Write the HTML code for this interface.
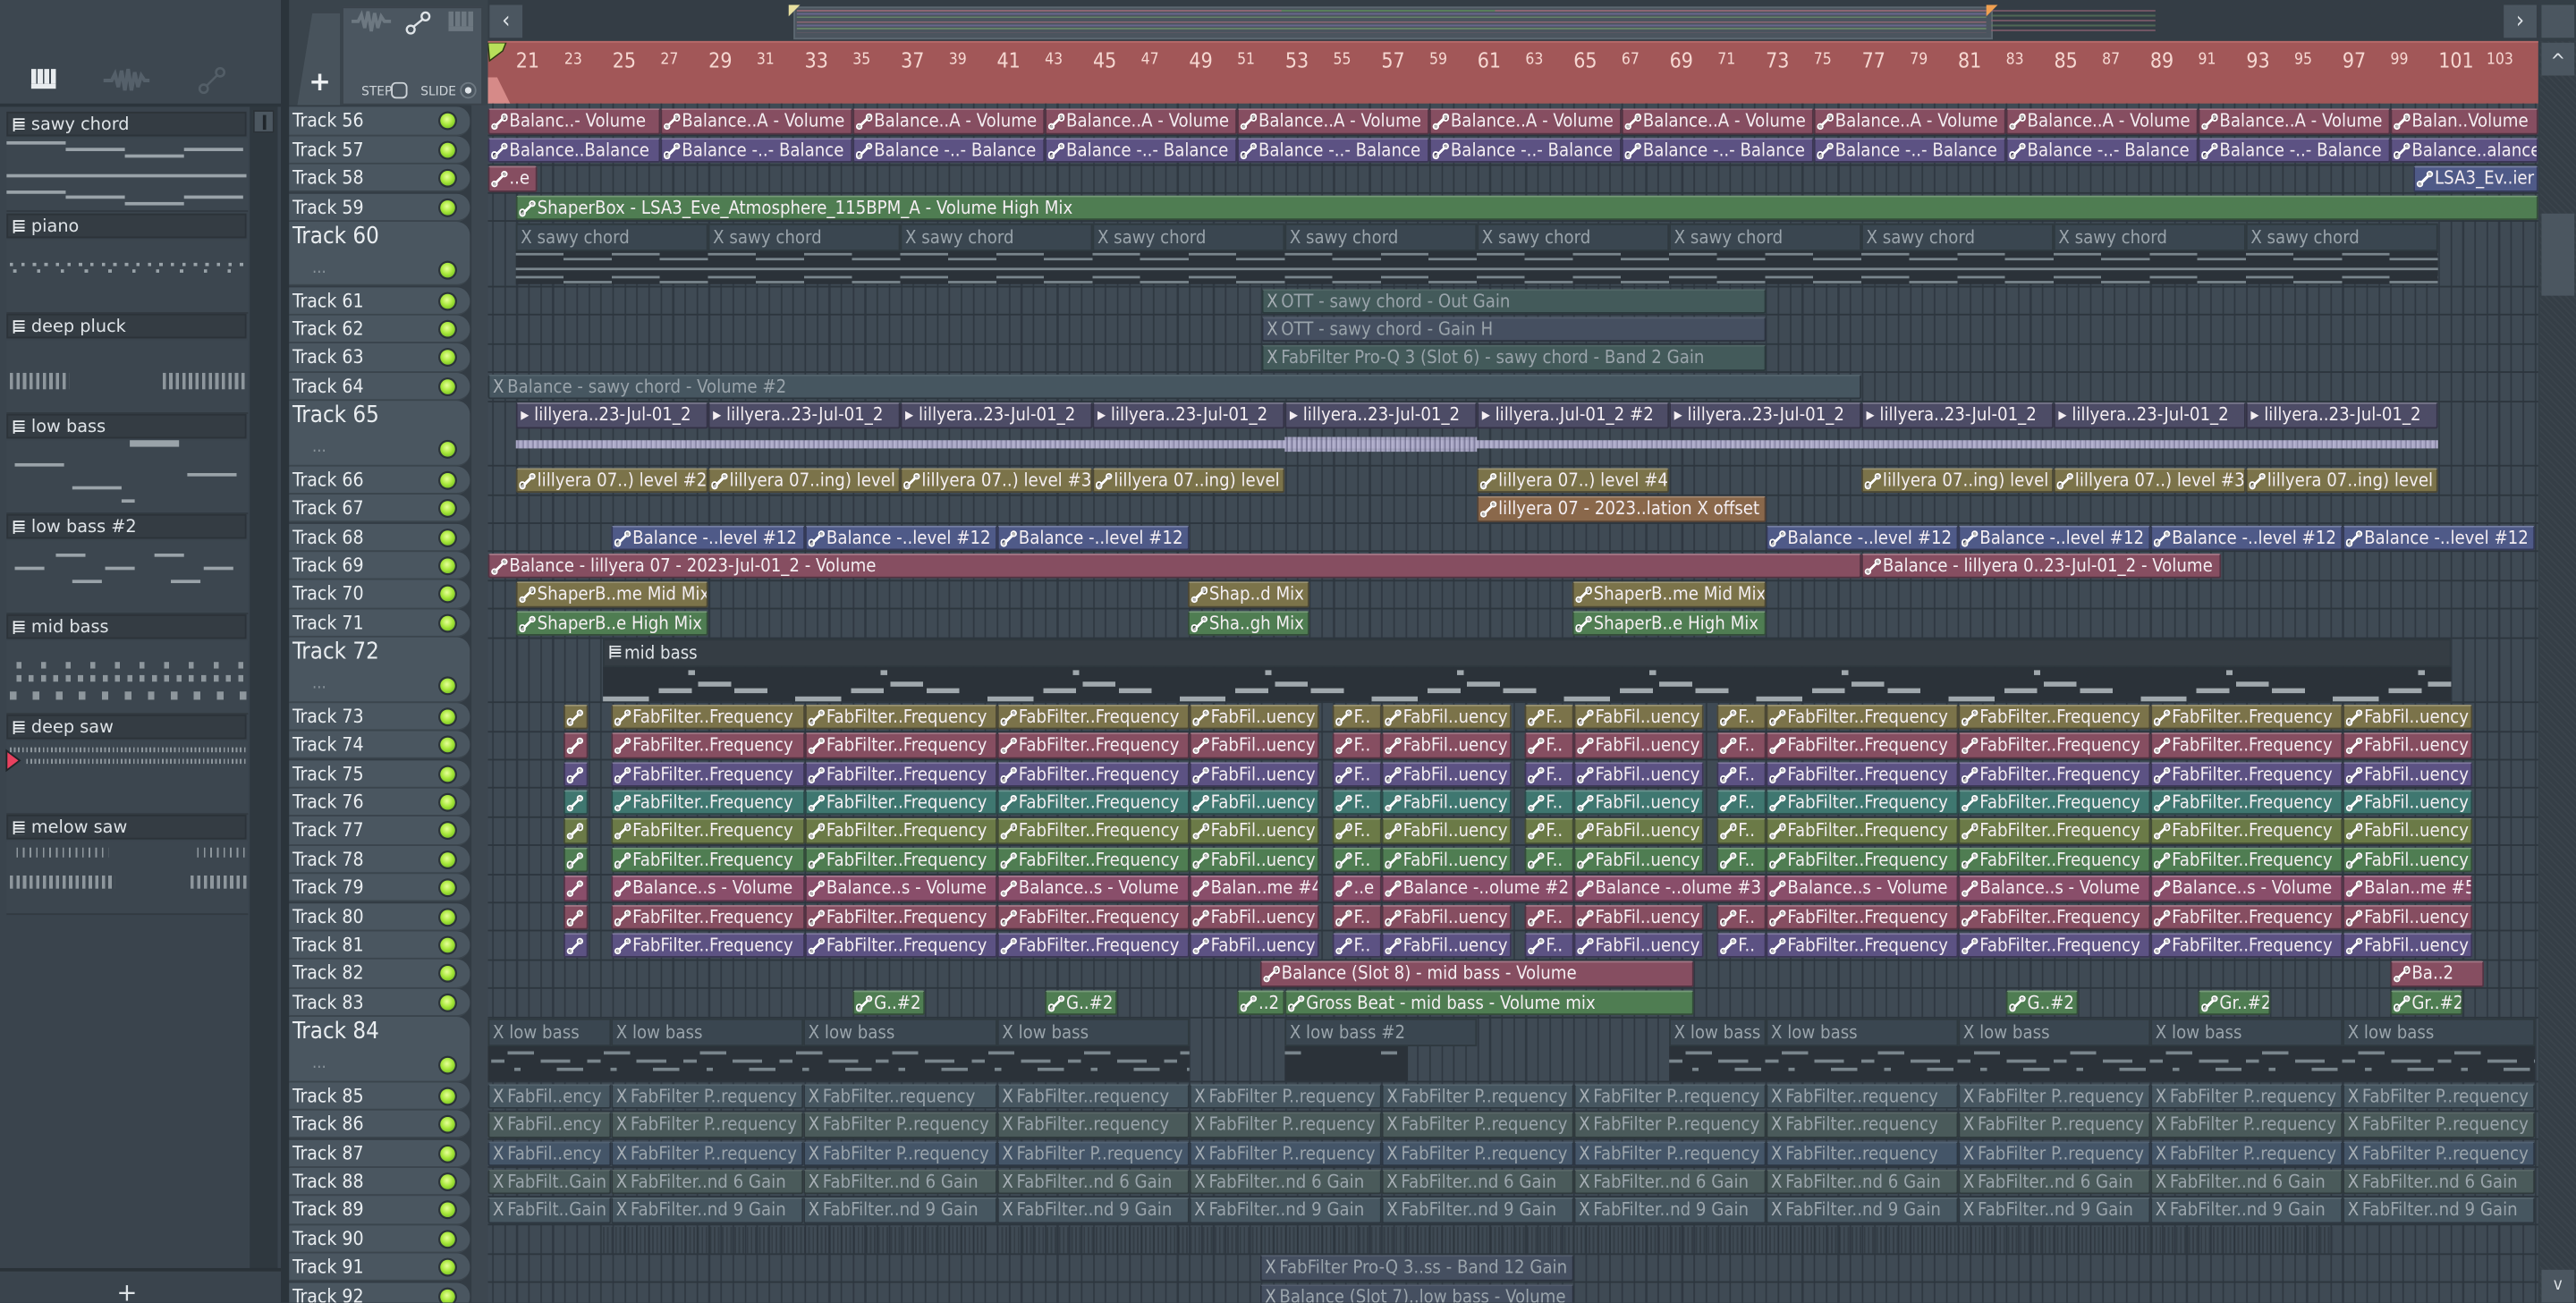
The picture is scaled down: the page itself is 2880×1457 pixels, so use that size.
<!DOCTYPE html>
<html><head><meta charset="utf-8">
<style>
html,body{margin:0;padding:0;width:2880px;height:1456px;overflow:hidden;background:#343e46}
.s{position:absolute;left:0;top:0;width:1568px;height:793px;transform:scale(1.83674);transform-origin:0 0;overflow:hidden;background:#343e46;font-family:"Liberation Sans Narrow","DejaVu Sans Condensed","Liberation Sans",sans-serif}
.ab{position:absolute}
/* left browser */
.lp{position:absolute;left:0;top:0;width:171px;height:793px;background:#3a444d}
.lt{position:absolute;left:0;top:0;width:171px;height:63px;background:#3d4750;border-bottom:2px solid #2c353c}
.li{position:absolute;left:4px;width:147px;height:44px;background:#3c464f;border-bottom:1px solid #323a41}
.lh{position:absolute;left:4px;width:146px;height:15px;background:#343c43;border:1px solid #2c3339;color:#dfe4e8;font-family:"DejaVu Sans","Liberation Sans",sans-serif;font-size:10.5px;line-height:15px;padding-left:14px;box-sizing:border-box}
.lh:before{content:"";position:absolute;left:3px;top:3px;width:6px;height:8px;background:repeating-linear-gradient(#e8ecef 0 1px,#343c43 1px 2px);border-left:1px solid #e8ecef}
.nl{position:absolute;height:2px;background:#9aa3a9}
.tk{position:absolute;width:1px;background:#8e979d}
/* track headers */
.th{position:absolute;left:176px;width:110px;background:#4a5660;border-radius:0 8px 8px 0;border-bottom:1px solid #3b454d;box-sizing:border-box;color:#e9edf0;font-size:11.5px;padding-left:2px}
.th.t{font-size:14px}
.led{position:absolute;left:92px;width:9px;height:9px;border-radius:50%;background:radial-gradient(circle at 45% 40%,#e6ff9a 0,#a9e83c 45%,#5aa814 100%);box-shadow:0 0 0 1.2px #2a3238}
/* grid */
.gr{position:absolute;left:297px;top:63px;width:1248px;height:730px;background-color:#3f4a54;
background-image:repeating-linear-gradient(90deg,#2f3841 0 1px,transparent 1px 7.3125px);background-position:2.6px 0}
.rl{position:absolute;left:297px;width:1248px;height:1px;background:#2d363e}
.r{position:absolute;left:0;width:1568px}
.c{position:absolute;top:1px;height:15.5px;box-sizing:border-box;border:1px solid rgba(20,20,30,.45);border-top:1px solid rgba(255,255,255,.22);overflow:hidden;white-space:nowrap;font-size:11px;line-height:13px;color:#f4eef2;padding-left:2px;border-radius:1.5px}
.c i{display:inline-block;position:relative;width:8px;height:8px;margin-right:2px;vertical-align:-1px;background:linear-gradient(135deg,transparent 44%,#fff 44%,#fff 58%,transparent 58%)}
.c i:before,.c i:after{content:"";position:absolute;width:2.4px;height:2.4px;border:1px solid #fff;border-radius:50%;background:rgba(0,0,0,.3)}
.c i:before{left:-1px;bottom:-1px}.c i:after{right:-1px;top:-1px}
.m{color:#9aa4ab;border-color:rgba(20,25,30,.5);border-top-color:rgba(255,255,255,.08)}
.m b{font-weight:normal;color:#a8b0b6;margin-right:2px}
.rs{background:#864e61}.pu{background:#5c5283}.bl{background:#4f5a88}.gn{background:#4f7d52}.ol{background:#7b734a}
.or{background:#8a684b}.tl{background:#3f7770}.og{background:#6b7a47}.pk{background:#894e6a}
.m1{background:#3e4f58}.m2{background:#435a5a}.m3{background:#454f60}.m4{background:#465660}.m5{background:#4a5a5a}.m6{background:#445568}
.ph{position:absolute;top:1px;height:17px;background:#3a4650;border:1px solid #2f393f;box-sizing:border-box;color:#9aa4ab;font-size:11px;line-height:15px;padding-left:2px;overflow:hidden;white-space:nowrap}
.pb{position:absolute;top:18px;height:20.5px;background:#2b3239}
.ru{position:absolute;left:297px;top:25px;width:1248px;height:39px;background:#a25758;border-top:1px solid #b86a6a}
.ru span{position:absolute;top:5px;color:#f6d8d2;font-size:9.5px}
.ru span.b{font-size:12.5px;top:3px}
</style></head><body><div class="s">

<!-- LEFT BROWSER -->
<div class="lp"></div>
<div class="lt">
 <div class="ab" style="left:19px;top:42px;width:15px;height:12px;background:repeating-linear-gradient(90deg,#e8ecef 0 3px,#3d4750 3px 4px);border-bottom:3px solid #e8ecef;box-sizing:border-box"></div>
 <svg class="ab" style="left:62px;top:40px" width="30" height="18"><path d="M1 9 H6 L8 5 L10 13 L12 3 L14 15 L16 2 L18 15 L20 4 L22 13 L24 6 L26 9 H29" stroke="#55606a" stroke-width="2.2" fill="none"/></svg>
 <svg class="ab" style="left:120px;top:40px" width="18" height="18"><circle cx="4" cy="14" r="2.5" stroke="#535e67" stroke-width="1.4" fill="none"/><circle cx="14" cy="4" r="2.5" stroke="#535e67" stroke-width="1.4" fill="none"/><path d="M6 12 L12 6" stroke="#535e67" stroke-width="1.4"/></svg>
</div>
<div class="ab" style="left:152px;top:65px;width:17px;height:708px;background:#2f383f"></div>
<div class="ab" style="left:154px;top:67px;width:13px;height:14px;background:#4c5760;border:1px solid #2a3137;box-sizing:border-box"><div style="position:absolute;left:5px;top:2px;width:2px;height:9px;background:#20262b"></div></div>

<div class="lh" style="top:68px">sawy chord</div>
<div class="li" style="top:84px">
 <div class="nl" style="left:0;top:2px;width:36px"></div><div class="nl" style="left:36px;top:6px;width:36px"></div><div class="nl" style="left:72px;top:10px;width:36px"></div><div class="nl" style="left:108px;top:6px;width:36px"></div>
 <div class="nl" style="left:0;top:22px;width:146px"></div>
 <div class="nl" style="left:0;top:32px;width:36px"></div><div class="nl" style="left:36px;top:35px;width:36px"></div><div class="nl" style="left:72px;top:39px;width:36px"></div><div class="nl" style="left:108px;top:35px;width:36px"></div>
</div>
<div class="lh" style="top:130px">piano</div>
<div class="li" style="top:146px;background-image:repeating-linear-gradient(90deg,#9aa3a9 0 2px,transparent 2px 7px);background-size:146px 2px;background-repeat:no-repeat;background-position:2px 14px"></div>
<div class="ab" style="left:8px;top:164px;width:140px;height:2px;background:repeating-linear-gradient(90deg,#9aa3a9 0 2px,transparent 2px 14.5px)"></div>
<div class="lh" style="top:191px">deep pluck</div>
<div class="li" style="top:207px"><div class="ab" style="left:2px;top:20px;width:36px;height:10px;background:repeating-linear-gradient(90deg,#8e979d 0 2px,transparent 2px 4px)"></div><div class="ab" style="left:95px;top:20px;width:50px;height:10px;background:repeating-linear-gradient(90deg,#8e979d 0 2px,transparent 2px 4px)"></div></div>
<div class="lh" style="top:252px">low bass</div>
<div class="li" style="top:268px"><div class="nl" style="left:75px;top:0;width:30px;height:4px"></div><div class="nl" style="left:5px;top:14px;width:30px"></div><div class="nl" style="left:110px;top:20px;width:30px"></div><div class="nl" style="left:40px;top:28px;width:30px"></div><div class="nl" style="left:70px;top:36px;width:8px"></div></div>
<div class="lh" style="top:313px">low bass #2</div>
<div class="li" style="top:329px"><div class="nl" style="left:30px;top:8px;width:18px"></div><div class="nl" style="left:90px;top:8px;width:18px"></div><div class="nl" style="left:5px;top:16px;width:18px"></div><div class="nl" style="left:60px;top:16px;width:18px"></div><div class="nl" style="left:120px;top:16px;width:18px"></div><div class="nl" style="left:40px;top:24px;width:18px"></div><div class="nl" style="left:100px;top:24px;width:18px"></div></div>
<div class="lh" style="top:374px">mid bass</div>
<div class="li" style="top:390px"><div class="ab" style="left:6px;top:13px;width:140px;height:4px;background:repeating-linear-gradient(90deg,#8e979d 0 3px,transparent 3px 15px)"></div><div class="ab" style="left:6px;top:21px;width:140px;height:4px;background:repeating-linear-gradient(90deg,#8e979d 0 3px,transparent 3px 7.5px)"></div><div class="ab" style="left:2px;top:31px;width:144px;height:5px;background:repeating-linear-gradient(90deg,#8e979d 0 4px,transparent 4px 14px)"></div></div>
<div class="lh" style="top:435px">deep saw</div>
<div class="li" style="top:451px"><div class="ab" style="left:2px;top:4px;width:144px;height:3px;background:repeating-linear-gradient(90deg,#8e979d 0 1px,transparent 1px 2.5px)"></div><div class="ab" style="left:12px;top:11px;width:134px;height:3px;background:repeating-linear-gradient(90deg,#8e979d 0 1px,transparent 1px 2.5px)"></div></div>
<svg class="ab" style="left:3px;top:456px" width="10" height="14"><path d="M1 1 L9 7 L1 13 Z" fill="#e8415f" stroke="#1f2428" stroke-width="1"/></svg>
<div class="lh" style="top:496px">melow saw</div>
<div class="li" style="top:512px"><div class="ab" style="left:6px;top:4px;width:56px;height:6px;background:repeating-linear-gradient(90deg,#8e979d 0 1px,transparent 1px 4px)"></div><div class="ab" style="left:2px;top:21px;width:64px;height:8px;background:repeating-linear-gradient(90deg,#8e979d 0 2px,transparent 2px 4px)"></div><div class="ab" style="left:112px;top:21px;width:34px;height:8px;background:repeating-linear-gradient(90deg,#8e979d 0 2px,transparent 2px 4px)"></div><div class="ab" style="left:116px;top:4px;width:30px;height:6px;background:repeating-linear-gradient(90deg,#8e979d 0 1px,transparent 1px 4px)"></div></div>
<div class="ab" style="left:0;top:772px;width:171px;height:2px;background:#2a3238"></div>
<div class="ab" style="left:71px;top:778px;color:#dfe4e8;font-size:15px;font-family:'DejaVu Sans',sans-serif">+</div>
<div class="ab" style="left:171px;top:0;width:5px;height:793px;background:#2b343b"></div>

<!-- HEADER TOP -->
<div class="ab" style="left:176px;top:0;width:121px;height:64px;background:#3a444c"></div>
<div class="ab" style="left:181px;top:8px;width:26px;height:56px;background:#48535c;clip-path:polygon(35% 0,100% 0,100% 100%,0 100%)"></div>
<div class="ab" style="left:188px;top:40px;color:#eef1f3;font-size:16px;font-family:'DejaVu Sans',sans-serif;font-weight:bold">+</div>
<div class="ab" style="left:208px;top:4px;width:86px;height:60px;background:#4b5660;border:1px solid #3a434b;box-sizing:border-box"></div>
<svg class="ab" style="left:213px;top:5px" width="26" height="16"><path d="M1 8 H5 L7 4 L9 12 L11 2 L13 14 L15 3 L17 12 L19 5 L21 8 H25" stroke="#6d7881" stroke-width="2" fill="none"/></svg>
<svg class="ab" style="left:246px;top:6px" width="17" height="16"><circle cx="4" cy="12" r="2.4" stroke="#dfe4e8" stroke-width="1.3" fill="none"/><circle cx="13" cy="4" r="2.4" stroke="#dfe4e8" stroke-width="1.3" fill="none"/><path d="M6 10 L11 6" stroke="#dfe4e8" stroke-width="1.3"/></svg>
<div class="ab" style="left:273px;top:7px;width:15px;height:12px;background:repeating-linear-gradient(90deg,#6d7881 0 3px,#4b5660 3px 4px);border-bottom:3px solid #6d7881;box-sizing:border-box"></div>
<div class="ab" style="left:220px;top:51px;color:#cdd3d8;font-size:7.5px;font-family:'DejaVu Sans',sans-serif">STEP</div>
<div class="ab" style="left:238px;top:50px;width:10px;height:10px;border:1.2px solid #cdd3d8;border-radius:3px;box-sizing:border-box"></div>
<div class="ab" style="left:256px;top:51px;color:#cdd3d8;font-size:7.5px;font-family:'DejaVu Sans',sans-serif">SLIDE</div>
<div class="ab" style="left:280px;top:50px;width:10px;height:10px;border:1.2px solid #6d7881;border-radius:50%;box-sizing:border-box"><div style="position:absolute;left:2px;top:2px;width:4px;height:4px;border-radius:50%;background:#dfe4e8"></div></div>

<!-- overview -->
<div class="ab" style="left:297px;top:0;width:1249px;height:25px;background:#343d45"></div>
<div class="ab" style="left:298px;top:3px;width:20px;height:20px;background:#4b5660;color:#dfe4e8;font-size:14px;text-align:center;line-height:20px">&lsaquo;</div>
<div class="ab" style="left:1524px;top:3px;width:20px;height:20px;background:#4b5660;color:#dfe4e8;font-size:14px;text-align:center;line-height:20px">&rsaquo;</div>
<div class="ab" style="left:1547px;top:3px;width:20px;height:20px;background:#4b5660"></div>
<div class="ab" style="left:483px;top:4px;width:728px;height:18px;background:rgba(120,130,140,.35);border:1px solid #5c6770"></div>
<div class="ab" style="left:485px;top:6px;width:724px;height:14px;background:repeating-linear-gradient(#9c6a78 0 1px,transparent 1px 2px,#6f6a98 2px 3px,transparent 3px 4px,#6b8c6a 4px 5px,transparent 5px 7px);opacity:.8"></div>
<div class="ab" style="left:1212px;top:6px;width:100px;height:14px;background:repeating-linear-gradient(#8a6070 0 1px,transparent 1px 3px,#5c7a5c 3px 4px,transparent 4px 6px);opacity:.7"></div>
<div class="ab" style="left:780px;top:6px;width:130px;height:1px;background:#55805a"></div>
<svg class="ab" style="left:480px;top:3px" width="8" height="8"><path d="M0 0 H7 L0 7Z" fill="#e8e0a0"/></svg>
<svg class="ab" style="left:1209px;top:3px" width="8" height="8"><path d="M0 0 H7 L0 7Z" fill="#f0a050"/></svg>

<!-- ruler -->
<div class="ru">
<span class="b" style="left:17px">21</span><span style="left:46.5px">23</span><span class="b" style="left:75.8px">25</span><span style="left:105px">27</span><span class="b" style="left:134.3px">29</span><span style="left:163.5px">31</span><span class="b" style="left:192.8px">33</span><span style="left:222px">35</span><span class="b" style="left:251.3px">37</span><span style="left:280.5px">39</span><span class="b" style="left:309.8px">41</span><span style="left:339px">43</span><span class="b" style="left:368.3px">45</span><span style="left:397.5px">47</span><span class="b" style="left:426.8px">49</span><span style="left:456px">51</span><span class="b" style="left:485.3px">53</span><span style="left:514.5px">55</span><span class="b" style="left:543.8px">57</span><span style="left:573px">59</span><span class="b" style="left:602.3px">61</span><span style="left:631.5px">63</span><span class="b" style="left:660.8px">65</span><span style="left:690px">67</span><span class="b" style="left:719.3px">69</span><span style="left:748.5px">71</span><span class="b" style="left:777.8px">73</span><span style="left:807px">75</span><span class="b" style="left:836.3px">77</span><span style="left:865.5px">79</span><span class="b" style="left:894.8px">81</span><span style="left:924px">83</span><span class="b" style="left:953.3px">85</span><span style="left:982.5px">87</span><span class="b" style="left:1011.8px">89</span><span style="left:1041px">91</span><span class="b" style="left:1070.3px">93</span><span style="left:1099.5px">95</span><span class="b" style="left:1128.8px">97</span><span style="left:1158px">99</span><span class="b" style="left:1187.3px">101</span><span style="left:1216.5px">103</span>
<div class="ab" style="left:0;top:21px;width:14px;height:17px;background:#d68a88;clip-path:polygon(0 0,40% 0,100% 100%,0 100%)"></div>
</div>
<svg class="ab" style="left:297px;top:26px" width="12" height="12"><path d="M0 0 H11 L9 5 L1 11Z" fill="#b8e05a" stroke="#2a3a10" stroke-width=".8"/></svg>

<!-- right scrollbar -->
<div class="ab" style="left:1546px;top:25px;width:22px;height:768px;background:repeating-linear-gradient(45deg,#3a434b 0 1px,#353e46 1px 3px)"></div>
<div class="ab" style="left:1547px;top:26px;width:20px;height:20px;background:#4b5660;color:#dfe4e8;font-size:12px;text-align:center;line-height:22px">^</div>
<div class="ab" style="left:1547px;top:130px;width:20px;height:50px;background:#4b5660"></div>
<div class="ab" style="left:1547px;top:773px;width:20px;height:20px;background:#4b5660;color:#dfe4e8;font-size:10px;text-align:center;line-height:20px">v</div>

<!-- track headers -->
<div class="ab" style="left:176px;top:64px;width:121px;height:729px;background:#333c44"></div>
<div class="ab" style="left:287px;top:64px;width:10px;height:729px;background:#3d4750"></div>
<div class="gr"></div>

<div class="th" style="top:65.3px;height:17.4px"><span style="position:absolute;top:1px">Track 56</span><div class="led" style="top:4px"></div></div>
<div class="th" style="top:82.7px;height:17.4px"><span style="position:absolute;top:1px">Track 57</span><div class="led" style="top:4px"></div></div>
<div class="th" style="top:100.1px;height:17.4px"><span style="position:absolute;top:1px">Track 58</span><div class="led" style="top:4px"></div></div>
<div class="th" style="top:117.5px;height:17.4px"><span style="position:absolute;top:1px">Track 59</span><div class="led" style="top:4px"></div></div>
<div class="th t" style="top:134.9px;height:39.6px"><span style="position:absolute;top:1px">Track 60</span><div class="led" style="top:25px"></div></div>
<div class="th" style="top:174.5px;height:17.4px"><span style="position:absolute;top:1px">Track 61</span><div class="led" style="top:4px"></div></div>
<div class="th" style="top:191.9px;height:17.4px"><span style="position:absolute;top:1px">Track 62</span><div class="led" style="top:4px"></div></div>
<div class="th" style="top:209.3px;height:17.4px"><span style="position:absolute;top:1px">Track 63</span><div class="led" style="top:4px"></div></div>
<div class="th" style="top:226.7px;height:17.4px"><span style="position:absolute;top:1px">Track 64</span><div class="led" style="top:4px"></div></div>
<div class="th t" style="top:244.1px;height:39.6px"><span style="position:absolute;top:1px">Track 65</span><div class="led" style="top:25px"></div></div>
<div class="th" style="top:283.7px;height:17.4px"><span style="position:absolute;top:1px">Track 66</span><div class="led" style="top:4px"></div></div>
<div class="th" style="top:301.1px;height:17.4px"><span style="position:absolute;top:1px">Track 67</span><div class="led" style="top:4px"></div></div>
<div class="th" style="top:318.5px;height:17.4px"><span style="position:absolute;top:1px">Track 68</span><div class="led" style="top:4px"></div></div>
<div class="th" style="top:335.9px;height:17.4px"><span style="position:absolute;top:1px">Track 69</span><div class="led" style="top:4px"></div></div>
<div class="th" style="top:353.3px;height:17.4px"><span style="position:absolute;top:1px">Track 70</span><div class="led" style="top:4px"></div></div>
<div class="th" style="top:370.7px;height:17.4px"><span style="position:absolute;top:1px">Track 71</span><div class="led" style="top:4px"></div></div>
<div class="th t" style="top:388.1px;height:39.6px"><span style="position:absolute;top:1px">Track 72</span><div class="led" style="top:25px"></div></div>
<div class="th" style="top:427.7px;height:17.4px"><span style="position:absolute;top:1px">Track 73</span><div class="led" style="top:4px"></div></div>
<div class="th" style="top:445.1px;height:17.4px"><span style="position:absolute;top:1px">Track 74</span><div class="led" style="top:4px"></div></div>
<div class="th" style="top:462.5px;height:17.4px"><span style="position:absolute;top:1px">Track 75</span><div class="led" style="top:4px"></div></div>
<div class="th" style="top:479.9px;height:17.4px"><span style="position:absolute;top:1px">Track 76</span><div class="led" style="top:4px"></div></div>
<div class="th" style="top:497.3px;height:17.4px"><span style="position:absolute;top:1px">Track 77</span><div class="led" style="top:4px"></div></div>
<div class="th" style="top:514.7px;height:17.4px"><span style="position:absolute;top:1px">Track 78</span><div class="led" style="top:4px"></div></div>
<div class="th" style="top:532.1px;height:17.4px"><span style="position:absolute;top:1px">Track 79</span><div class="led" style="top:4px"></div></div>
<div class="th" style="top:549.5px;height:17.4px"><span style="position:absolute;top:1px">Track 80</span><div class="led" style="top:4px"></div></div>
<div class="th" style="top:566.9px;height:17.4px"><span style="position:absolute;top:1px">Track 81</span><div class="led" style="top:4px"></div></div>
<div class="th" style="top:584.3px;height:17.4px"><span style="position:absolute;top:1px">Track 82</span><div class="led" style="top:4px"></div></div>
<div class="th" style="top:601.7px;height:17.4px"><span style="position:absolute;top:1px">Track 83</span><div class="led" style="top:4px"></div></div>
<div class="th t" style="top:619.1px;height:39.6px"><span style="position:absolute;top:1px">Track 84</span><div class="led" style="top:25px"></div></div>
<div class="th" style="top:658.7px;height:17.4px"><span style="position:absolute;top:1px">Track 85</span><div class="led" style="top:4px"></div></div>
<div class="th" style="top:676.1px;height:17.4px"><span style="position:absolute;top:1px">Track 86</span><div class="led" style="top:4px"></div></div>
<div class="th" style="top:693.5px;height:17.4px"><span style="position:absolute;top:1px">Track 87</span><div class="led" style="top:4px"></div></div>
<div class="th" style="top:710.9px;height:17.4px"><span style="position:absolute;top:1px">Track 88</span><div class="led" style="top:4px"></div></div>
<div class="th" style="top:728.3px;height:17.4px"><span style="position:absolute;top:1px">Track 89</span><div class="led" style="top:4px"></div></div>
<div class="th" style="top:745.7px;height:17.4px"><span style="position:absolute;top:1px">Track 90</span><div class="led" style="top:4px"></div></div>
<div class="th" style="top:763.1px;height:17.4px"><span style="position:absolute;top:1px">Track 91</span><div class="led" style="top:4px"></div></div>
<div class="th" style="top:780.5px;height:17.4px"><span style="position:absolute;top:1px">Track 92</span><div class="led" style="top:4px"></div></div>
<div class="ab" style="left:190px;top:158px;color:#8a949b;font-size:10px">...</div>
<div class="ab" style="left:190px;top:267px;color:#8a949b;font-size:10px">...</div>
<div class="ab" style="left:190px;top:411px;color:#8a949b;font-size:10px">...</div>
<div class="ab" style="left:190px;top:642px;color:#8a949b;font-size:10px">...</div>

<!-- row separators -->
<div class="rl" style="top:82.2px"></div><div class="rl" style="top:99.6px"></div><div class="rl" style="top:117px"></div><div class="rl" style="top:134.4px"></div><div class="rl" style="top:174px"></div><div class="rl" style="top:191.4px"></div><div class="rl" style="top:208.8px"></div><div class="rl" style="top:226.2px"></div><div class="rl" style="top:243.6px"></div><div class="rl" style="top:283.2px"></div><div class="rl" style="top:300.6px"></div><div class="rl" style="top:318px"></div><div class="rl" style="top:335.4px"></div><div class="rl" style="top:352.8px"></div><div class="rl" style="top:370.2px"></div><div class="rl" style="top:387.6px"></div><div class="rl" style="top:427.2px"></div><div class="rl" style="top:444.6px"></div><div class="rl" style="top:462px"></div><div class="rl" style="top:479.4px"></div><div class="rl" style="top:496.8px"></div><div class="rl" style="top:514.2px"></div><div class="rl" style="top:531.6px"></div><div class="rl" style="top:549px"></div><div class="rl" style="top:566.4px"></div><div class="rl" style="top:583.8px"></div><div class="rl" style="top:601.2px"></div><div class="rl" style="top:618.6px"></div><div class="rl" style="top:658.2px"></div><div class="rl" style="top:675.6px"></div><div class="rl" style="top:693px"></div><div class="rl" style="top:710.4px"></div><div class="rl" style="top:727.8px"></div><div class="rl" style="top:745.2px"></div><div class="rl" style="top:762.6px"></div><div class="rl" style="top:780px"></div>

<!-- 56 -->
<div class="r" style="top:65.3px">
<div class="c rs" style="left:297px;width:105px"><i></i>Balanc..- Volume</div><div class="c rs" style="left:402px;width:117px"><i></i>Balance..A - Volume</div><div class="c rs" style="left:519px;width:117px"><i></i>Balance..A - Volume</div><div class="c rs" style="left:636px;width:117px"><i></i>Balance..A - Volume</div><div class="c rs" style="left:753px;width:117px"><i></i>Balance..A - Volume</div><div class="c rs" style="left:870px;width:117px"><i></i>Balance..A - Volume</div><div class="c rs" style="left:987px;width:117px"><i></i>Balance..A - Volume</div><div class="c rs" style="left:1104px;width:117px"><i></i>Balance..A - Volume</div><div class="c rs" style="left:1221px;width:117px"><i></i>Balance..A - Volume</div><div class="c rs" style="left:1338px;width:117px"><i></i>Balance..A - Volume</div><div class="c rs" style="left:1455px;width:90px"><i></i>Balan..Volume</div>
</div>
<!-- 57 -->
<div class="r" style="top:82.7px">
<div class="c pu" style="left:297px;width:105px"><i></i>Balance..Balance</div><div class="c pu" style="left:402px;width:117px"><i></i>Balance -..- Balance</div><div class="c pu" style="left:519px;width:117px"><i></i>Balance -..- Balance</div><div class="c pu" style="left:636px;width:117px"><i></i>Balance -..- Balance</div><div class="c pu" style="left:753px;width:117px"><i></i>Balance -..- Balance</div><div class="c pu" style="left:870px;width:117px"><i></i>Balance -..- Balance</div><div class="c pu" style="left:987px;width:117px"><i></i>Balance -..- Balance</div><div class="c pu" style="left:1104px;width:117px"><i></i>Balance -..- Balance</div><div class="c pu" style="left:1221px;width:117px"><i></i>Balance -..- Balance</div><div class="c pu" style="left:1338px;width:117px"><i></i>Balance -..- Balance</div><div class="c pu" style="left:1455px;width:90px"><i></i>Balance..alance</div>
</div>
<!-- 58 -->
<div class="r" style="top:100.1px">
<div class="c rs" style="left:297px;width:30px"><i></i>..e</div><div class="c bl" style="left:1469px;width:76px"><i></i>LSA3_Ev..ier</div>
</div>
<!-- 59 -->
<div class="r" style="top:117.5px">
<div class="c gn" style="left:314px;width:1231px"><i></i>ShaperBox - LSA3_Eve_Atmosphere_115BPM_A - Volume High Mix</div>
</div>
<!-- 60 -->
<div class="r" style="top:134.9px">
<div class="ph" style="left:314px;width:117px"><b style="font-weight:normal">X</b> sawy chord</div><div class="ph" style="left:431px;width:117px">X sawy chord</div><div class="ph" style="left:548px;width:117px">X sawy chord</div><div class="ph" style="left:665px;width:117px">X sawy chord</div><div class="ph" style="left:782px;width:117px">X sawy chord</div><div class="ph" style="left:899px;width:117px">X sawy chord</div><div class="ph" style="left:1016px;width:117px">X sawy chord</div><div class="ph" style="left:1133px;width:117px">X sawy chord</div><div class="ph" style="left:1250px;width:117px">X sawy chord</div><div class="ph" style="left:1367px;width:117px">X sawy chord</div>
<div class="pb" style="left:314px;width:1170px;background-color:#2b3239;background-image:repeating-linear-gradient(90deg,#79858c 0 29px,transparent 29px 58.5px),repeating-linear-gradient(90deg,transparent 0 29px,#79858c 29px 58.5px),linear-gradient(#79858c,#79858c),repeating-linear-gradient(90deg,#79858c 0 29px,transparent 29px 58.5px),repeating-linear-gradient(90deg,transparent 0 29px,#79858c 29px 58.5px);background-size:100% 1.5px;background-repeat:no-repeat;background-position:0 1px,0 4px,0 10px,0 15px,0 18px"></div>
</div>
<!-- 61-63 -->
<div class="r" style="top:174.5px"><div class="c m m2" style="left:768px;width:307px"><b>X</b>OTT - sawy chord - Out Gain</div></div>
<div class="r" style="top:191.9px"><div class="c m m3" style="left:768px;width:307px"><b>X</b>OTT - sawy chord - Gain H</div></div>
<div class="r" style="top:209.3px"><div class="c m m2" style="left:768px;width:307px"><b>X</b>FabFilter Pro-Q 3 (Slot 6) - sawy chord - Band 2 Gain</div></div>
<!-- 64 -->
<div class="r" style="top:226.7px"><div class="c m m4" style="left:297px;width:836px"><b>X</b>Balance - sawy chord - Volume #2</div></div>
<!-- 65 -->
<div class="r" style="top:244.1px">
<div class="c" style="left:314px;width:117px;background:#4d4c66">&#9656; lillyera..23-Jul-01_2</div><div class="c" style="left:431px;width:117px;background:#4d4c66">&#9656; lillyera..23-Jul-01_2</div><div class="c" style="left:548px;width:117px;background:#4d4c66">&#9656; lillyera..23-Jul-01_2</div><div class="c" style="left:665px;width:117px;background:#4d4c66">&#9656; lillyera..23-Jul-01_2</div><div class="c" style="left:782px;width:117px;background:#4d4c66">&#9656; lillyera..23-Jul-01_2</div><div class="c" style="left:899px;width:117px;background:#4d4c66">&#9656; lillyera..Jul-01_2 #2</div><div class="c" style="left:1016px;width:117px;background:#4d4c66">&#9656; lillyera..23-Jul-01_2</div><div class="c" style="left:1133px;width:117px;background:#4d4c66">&#9656; lillyera..23-Jul-01_2</div><div class="c" style="left:1250px;width:117px;background:#4d4c66">&#9656; lillyera..23-Jul-01_2</div><div class="c" style="left:1367px;width:117px;background:#4d4c66">&#9656; lillyera..23-Jul-01_2</div>
<div class="ab" style="left:314px;top:24px;width:1170px;height:5px;background:repeating-linear-gradient(90deg,#aaa8c6 0 1px,#8e8cab 1px 2px,#b4b2cf 2px 3px)"></div>
<div class="ab" style="left:782px;top:22px;width:117px;height:9px;background:repeating-linear-gradient(90deg,#aaa8c6 0 1px,#7f7d9c 1px 2px,#b4b2cf 2px 3px);opacity:.9"></div>
</div>
<!-- 66 -->
<div class="r" style="top:283.7px">
<div class="c ol" style="left:314px;width:117px"><i></i>lillyera 07..) level #2</div><div class="c ol" style="left:431px;width:117px"><i></i>lillyera 07..ing) level</div><div class="c ol" style="left:548px;width:117px"><i></i>lillyera 07..) level #3</div><div class="c ol" style="left:665px;width:117px"><i></i>lillyera 07..ing) level</div><div class="c ol" style="left:899px;width:117px"><i></i>lillyera 07..) level #4</div><div class="c ol" style="left:1133px;width:117px"><i></i>lillyera 07..ing) level</div><div class="c ol" style="left:1250px;width:117px"><i></i>lillyera 07..) level #3</div><div class="c ol" style="left:1367px;width:117px"><i></i>lillyera 07..ing) level</div>
</div>
<!-- 67 -->
<div class="r" style="top:301.1px"><div class="c or" style="left:899px;width:176px"><i></i>lillyera 07 - 2023..lation X offset</div></div>
<!-- 68 -->
<div class="r" style="top:318.5px">
<div class="c bl" style="left:372px;width:118px"><i></i>Balance -..level #12</div><div class="c bl" style="left:490px;width:117px"><i></i>Balance -..level #12</div><div class="c bl" style="left:607px;width:117px"><i></i>Balance -..level #12</div><div class="c bl" style="left:1075px;width:117px"><i></i>Balance -..level #12</div><div class="c bl" style="left:1192px;width:117px"><i></i>Balance -..level #12</div><div class="c bl" style="left:1309px;width:117px"><i></i>Balance -..level #12</div><div class="c bl" style="left:1426px;width:117px"><i></i>Balance -..level #12</div>
</div>
<!-- 69 -->
<div class="r" style="top:335.9px">
<div class="c rs" style="left:297px;width:836px"><i></i>Balance - lillyera 07 - 2023-Jul-01_2 - Volume</div><div class="c rs" style="left:1133px;width:219px"><i></i>Balance - lillyera 0..23-Jul-01_2 - Volume</div>
</div>
<!-- 70/71 -->
<div class="r" style="top:353.3px">
<div class="c ol" style="left:314px;width:117px"><i></i>ShaperB..me Mid Mix</div><div class="c ol" style="left:723px;width:74px"><i></i>Shap..d Mix</div><div class="c ol" style="left:957px;width:118px"><i></i>ShaperB..me Mid Mix</div>
</div>
<div class="r" style="top:370.7px">
<div class="c gn" style="left:314px;width:117px"><i></i>ShaperB..e High Mix</div><div class="c gn" style="left:723px;width:74px"><i></i>Sha..gh Mix</div><div class="c gn" style="left:957px;width:118px"><i></i>ShaperB..e High Mix</div>
</div>
<!-- 72 -->
<div class="r" style="top:388.1px">
<div class="ph" style="left:367px;width:1125px;background:#353d44;color:#dfe4e8;padding-left:12px">mid bass<span style="position:absolute;left:3px;top:3px;width:6px;height:8px;background:repeating-linear-gradient(#e8ecef 0 1px,#353d44 1px 2px);border-left:1px solid #e8ecef"></span></div>
<div class="pb" style="left:367px;width:1125px;background-color:#2b3239;background-image:repeating-linear-gradient(90deg,transparent 0 52px,#a0a8ad 52px 56px,transparent 56px 117px),repeating-linear-gradient(90deg,transparent 0 58px,#a0a8ad 58px 78px,transparent 78px 117px),repeating-linear-gradient(90deg,transparent 0 34px,#a0a8ad 34px 54px,transparent 54px 80px,#a0a8ad 80px 100px,transparent 100px 117px),repeating-linear-gradient(90deg,#a0a8ad 0 28px,transparent 28px 117px);background-size:100% 3px;background-repeat:no-repeat;background-position:0 2px,0 9px,0 13px,0 18px"></div>
</div>
<!-- 73-81 -->
<div class="r" style="top:427.7px"><div class="c ol" style="left:343px;width:15px"><i></i></div><div class="c ol" style="left:372px;width:118px"><i></i>FabFilter..Frequency</div><div class="c ol" style="left:490px;width:117px"><i></i>FabFilter..Frequency</div><div class="c ol" style="left:607px;width:117px"><i></i>FabFilter..Frequency</div><div class="c ol" style="left:724px;width:79px"><i></i>FabFil..uency</div><div class="c ol" style="left:811px;width:30px"><i></i>F..</div><div class="c ol" style="left:841px;width:79px"><i></i>FabFil..uency</div><div class="c ol" style="left:928px;width:30px"><i></i>F..</div><div class="c ol" style="left:958px;width:79px"><i></i>FabFil..uency</div><div class="c ol" style="left:1045px;width:30px"><i></i>F..</div><div class="c ol" style="left:1075px;width:117px"><i></i>FabFilter..Frequency</div><div class="c ol" style="left:1192px;width:117px"><i></i>FabFilter..Frequency</div><div class="c ol" style="left:1309px;width:117px"><i></i>FabFilter..Frequency</div><div class="c ol" style="left:1426px;width:79px"><i></i>FabFil..uency</div></div>
<div class="r" style="top:445.1px"><div class="c rs" style="left:343px;width:15px"><i></i></div><div class="c rs" style="left:372px;width:118px"><i></i>FabFilter..Frequency</div><div class="c rs" style="left:490px;width:117px"><i></i>FabFilter..Frequency</div><div class="c rs" style="left:607px;width:117px"><i></i>FabFilter..Frequency</div><div class="c rs" style="left:724px;width:79px"><i></i>FabFil..uency</div><div class="c rs" style="left:811px;width:30px"><i></i>F..</div><div class="c rs" style="left:841px;width:79px"><i></i>FabFil..uency</div><div class="c rs" style="left:928px;width:30px"><i></i>F..</div><div class="c rs" style="left:958px;width:79px"><i></i>FabFil..uency</div><div class="c rs" style="left:1045px;width:30px"><i></i>F..</div><div class="c rs" style="left:1075px;width:117px"><i></i>FabFilter..Frequency</div><div class="c rs" style="left:1192px;width:117px"><i></i>FabFilter..Frequency</div><div class="c rs" style="left:1309px;width:117px"><i></i>FabFilter..Frequency</div><div class="c rs" style="left:1426px;width:79px"><i></i>FabFil..uency</div></div>
<div class="r" style="top:462.5px"><div class="c pu" style="left:343px;width:15px"><i></i></div><div class="c pu" style="left:372px;width:118px"><i></i>FabFilter..Frequency</div><div class="c pu" style="left:490px;width:117px"><i></i>FabFilter..Frequency</div><div class="c pu" style="left:607px;width:117px"><i></i>FabFilter..Frequency</div><div class="c pu" style="left:724px;width:79px"><i></i>FabFil..uency</div><div class="c pu" style="left:811px;width:30px"><i></i>F..</div><div class="c pu" style="left:841px;width:79px"><i></i>FabFil..uency</div><div class="c pu" style="left:928px;width:30px"><i></i>F..</div><div class="c pu" style="left:958px;width:79px"><i></i>FabFil..uency</div><div class="c pu" style="left:1045px;width:30px"><i></i>F..</div><div class="c pu" style="left:1075px;width:117px"><i></i>FabFilter..Frequency</div><div class="c pu" style="left:1192px;width:117px"><i></i>FabFilter..Frequency</div><div class="c pu" style="left:1309px;width:117px"><i></i>FabFilter..Frequency</div><div class="c pu" style="left:1426px;width:79px"><i></i>FabFil..uency</div></div>
<div class="r" style="top:479.9px"><div class="c tl" style="left:343px;width:15px"><i></i></div><div class="c tl" style="left:372px;width:118px"><i></i>FabFilter..Frequency</div><div class="c tl" style="left:490px;width:117px"><i></i>FabFilter..Frequency</div><div class="c tl" style="left:607px;width:117px"><i></i>FabFilter..Frequency</div><div class="c tl" style="left:724px;width:79px"><i></i>FabFil..uency</div><div class="c tl" style="left:811px;width:30px"><i></i>F..</div><div class="c tl" style="left:841px;width:79px"><i></i>FabFil..uency</div><div class="c tl" style="left:928px;width:30px"><i></i>F..</div><div class="c tl" style="left:958px;width:79px"><i></i>FabFil..uency</div><div class="c tl" style="left:1045px;width:30px"><i></i>F..</div><div class="c tl" style="left:1075px;width:117px"><i></i>FabFilter..Frequency</div><div class="c tl" style="left:1192px;width:117px"><i></i>FabFilter..Frequency</div><div class="c tl" style="left:1309px;width:117px"><i></i>FabFilter..Frequency</div><div class="c tl" style="left:1426px;width:79px"><i></i>FabFil..uency</div></div>
<div class="r" style="top:497.3px"><div class="c og" style="left:343px;width:15px"><i></i></div><div class="c og" style="left:372px;width:118px"><i></i>FabFilter..Frequency</div><div class="c og" style="left:490px;width:117px"><i></i>FabFilter..Frequency</div><div class="c og" style="left:607px;width:117px"><i></i>FabFilter..Frequency</div><div class="c og" style="left:724px;width:79px"><i></i>FabFil..uency</div><div class="c og" style="left:811px;width:30px"><i></i>F..</div><div class="c og" style="left:841px;width:79px"><i></i>FabFil..uency</div><div class="c og" style="left:928px;width:30px"><i></i>F..</div><div class="c og" style="left:958px;width:79px"><i></i>FabFil..uency</div><div class="c og" style="left:1045px;width:30px"><i></i>F..</div><div class="c og" style="left:1075px;width:117px"><i></i>FabFilter..Frequency</div><div class="c og" style="left:1192px;width:117px"><i></i>FabFilter..Frequency</div><div class="c og" style="left:1309px;width:117px"><i></i>FabFilter..Frequency</div><div class="c og" style="left:1426px;width:79px"><i></i>FabFil..uency</div></div>
<div class="r" style="top:514.7px"><div class="c gn" style="left:343px;width:15px"><i></i></div><div class="c gn" style="left:372px;width:118px"><i></i>FabFilter..Frequency</div><div class="c gn" style="left:490px;width:117px"><i></i>FabFilter..Frequency</div><div class="c gn" style="left:607px;width:117px"><i></i>FabFilter..Frequency</div><div class="c gn" style="left:724px;width:79px"><i></i>FabFil..uency</div><div class="c gn" style="left:811px;width:30px"><i></i>F..</div><div class="c gn" style="left:841px;width:79px"><i></i>FabFil..uency</div><div class="c gn" style="left:928px;width:30px"><i></i>F..</div><div class="c gn" style="left:958px;width:79px"><i></i>FabFil..uency</div><div class="c gn" style="left:1045px;width:30px"><i></i>F..</div><div class="c gn" style="left:1075px;width:117px"><i></i>FabFilter..Frequency</div><div class="c gn" style="left:1192px;width:117px"><i></i>FabFilter..Frequency</div><div class="c gn" style="left:1309px;width:117px"><i></i>FabFilter..Frequency</div><div class="c gn" style="left:1426px;width:79px"><i></i>FabFil..uency</div></div>
<div class="r" style="top:532.1px"><div class="c pk" style="left:343px;width:15px"><i></i></div><div class="c pk" style="left:372px;width:118px"><i></i>Balance..s - Volume</div><div class="c pk" style="left:490px;width:117px"><i></i>Balance..s - Volume</div><div class="c pk" style="left:607px;width:117px"><i></i>Balance..s - Volume</div><div class="c pk" style="left:724px;width:79px"><i></i>Balan..me #4</div><div class="c pk" style="left:811px;width:30px"><i></i>..e</div><div class="c pk" style="left:841px;width:117px"><i></i>Balance -..olume #2</div><div class="c pk" style="left:958px;width:117px"><i></i>Balance -..olume #3</div><div class="c pk" style="left:1075px;width:117px"><i></i>Balance..s - Volume</div><div class="c pk" style="left:1192px;width:117px"><i></i>Balance..s - Volume</div><div class="c pk" style="left:1309px;width:117px"><i></i>Balance..s - Volume</div><div class="c pk" style="left:1426px;width:79px"><i></i>Balan..me #5</div></div>
<div class="r" style="top:549.5px"><div class="c rs" style="left:343px;width:15px"><i></i></div><div class="c rs" style="left:372px;width:118px"><i></i>FabFilter..Frequency</div><div class="c rs" style="left:490px;width:117px"><i></i>FabFilter..Frequency</div><div class="c rs" style="left:607px;width:117px"><i></i>FabFilter..Frequency</div><div class="c rs" style="left:724px;width:79px"><i></i>FabFil..uency</div><div class="c rs" style="left:811px;width:30px"><i></i>F..</div><div class="c rs" style="left:841px;width:79px"><i></i>FabFil..uency</div><div class="c rs" style="left:928px;width:30px"><i></i>F..</div><div class="c rs" style="left:958px;width:79px"><i></i>FabFil..uency</div><div class="c rs" style="left:1045px;width:30px"><i></i>F..</div><div class="c rs" style="left:1075px;width:117px"><i></i>FabFilter..Frequency</div><div class="c rs" style="left:1192px;width:117px"><i></i>FabFilter..Frequency</div><div class="c rs" style="left:1309px;width:117px"><i></i>FabFilter..Frequency</div><div class="c rs" style="left:1426px;width:79px"><i></i>FabFil..uency</div></div>
<div class="r" style="top:566.9px"><div class="c pu" style="left:343px;width:15px"><i></i></div><div class="c pu" style="left:372px;width:118px"><i></i>FabFilter..Frequency</div><div class="c pu" style="left:490px;width:117px"><i></i>FabFilter..Frequency</div><div class="c pu" style="left:607px;width:117px"><i></i>FabFilter..Frequency</div><div class="c pu" style="left:724px;width:79px"><i></i>FabFil..uency</div><div class="c pu" style="left:811px;width:30px"><i></i>F..</div><div class="c pu" style="left:841px;width:79px"><i></i>FabFil..uency</div><div class="c pu" style="left:928px;width:30px"><i></i>F..</div><div class="c pu" style="left:958px;width:79px"><i></i>FabFil..uency</div><div class="c pu" style="left:1045px;width:30px"><i></i>F..</div><div class="c pu" style="left:1075px;width:117px"><i></i>FabFilter..Frequency</div><div class="c pu" style="left:1192px;width:117px"><i></i>FabFilter..Frequency</div><div class="c pu" style="left:1309px;width:117px"><i></i>FabFilter..Frequency</div><div class="c pu" style="left:1426px;width:79px"><i></i>FabFil..uency</div></div>
<!-- 82 -->
<div class="r" style="top:584.3px"><div class="c rs" style="left:767px;width:264px"><i></i>Balance (Slot 8) - mid bass - Volume</div><div class="c rs" style="left:1455px;width:57px"><i></i>Ba..2</div></div>
<!-- 83 -->
<div class="r" style="top:601.7px"><div class="c gn" style="left:519px;width:44px"><i></i>G..#2</div><div class="c gn" style="left:636px;width:44px"><i></i>G..#2</div><div class="c gn" style="left:753px;width:29px"><i></i>..2</div><div class="c gn" style="left:782px;width:249px"><i></i>Gross Beat - mid bass - Volume mix</div><div class="c gn" style="left:1221px;width:44px"><i></i>G..#2</div><div class="c gn" style="left:1338px;width:44px"><i></i>Gr..#2</div><div class="c gn" style="left:1455px;width:44px"><i></i>Gr..#2</div></div>
<!-- 84 -->
<div class="r" style="top:619.1px">
<div class="ph" style="left:297px;width:75px">X low bass</div><div class="ph" style="left:372px;width:117px">X low bass</div><div class="ph" style="left:489px;width:118px">X low bass</div><div class="ph" style="left:607px;width:117px">X low bass</div><div class="ph" style="left:782px;width:117px">X low bass #2</div><div class="ph" style="left:1016px;width:59px">X low bass</div><div class="ph" style="left:1075px;width:117px">X low bass</div><div class="ph" style="left:1192px;width:117px">X low bass</div><div class="ph" style="left:1309px;width:117px">X low bass</div><div class="ph" style="left:1426px;width:117px">X low bass</div>
<div class="pb" style="left:297px;width:427px;background-color:#2b3239;background-image:repeating-linear-gradient(90deg,transparent 0 10px,#79858c 10px 26px,transparent 26px 58.5px),repeating-linear-gradient(90deg,#79858c 0 8px,transparent 8px 30px,#79858c 30px 48px,transparent 48px 58.5px),repeating-linear-gradient(90deg,transparent 0 14px,#79858c 14px 18px,transparent 18px 40px,#79858c 40px 56px,transparent 56px 58.5px);background-size:100% 2px;background-repeat:no-repeat;background-position:2px 3px,2px 8px,2px 13px"></div>
<div class="pb" style="left:782px;width:75px;background-color:#2b3239;background-image:repeating-linear-gradient(90deg,#79858c 0 10px,transparent 10px 58.5px);background-size:100% 2px;background-repeat:no-repeat;background-position:0 3px"></div>
<div class="pb" style="left:1016px;width:527px;background-color:#2b3239;background-image:repeating-linear-gradient(90deg,transparent 0 10px,#79858c 10px 26px,transparent 26px 58.5px),repeating-linear-gradient(90deg,#79858c 0 8px,transparent 8px 30px,#79858c 30px 48px,transparent 48px 58.5px),repeating-linear-gradient(90deg,transparent 0 14px,#79858c 14px 18px,transparent 18px 40px,#79858c 40px 56px,transparent 56px 58.5px);background-size:100% 2px;background-repeat:no-repeat;background-position:0 3px,0 8px,0 13px"></div>
</div>
<!-- 85-89 -->
<div class="r" style="top:658.7px"><div class="c m m4" style="left:297px;width:75px"><b>X</b>FabFil..ency</div><div class="c m m4" style="left:372px;width:117px"><b>X</b>FabFilter P..requency</div><div class="c m m4" style="left:489px;width:118px"><b>X</b>FabFilter..requency</div><div class="c m m4" style="left:607px;width:117px"><b>X</b>FabFilter..requency</div><div class="c m m4" style="left:724px;width:117px"><b>X</b>FabFilter P..requency</div><div class="c m m4" style="left:841px;width:117px"><b>X</b>FabFilter P..requency</div><div class="c m m4" style="left:958px;width:117px"><b>X</b>FabFilter P..requency</div><div class="c m m4" style="left:1075px;width:117px"><b>X</b>FabFilter..requency</div><div class="c m m4" style="left:1192px;width:117px"><b>X</b>FabFilter P..requency</div><div class="c m m4" style="left:1309px;width:117px"><b>X</b>FabFilter P..requency</div><div class="c m m4" style="left:1426px;width:117px"><b>X</b>FabFilter P..requency</div></div>
<div class="r" style="top:676.1px"><div class="c m m5" style="left:297px;width:75px"><b>X</b>FabFil..ency</div><div class="c m m5" style="left:372px;width:117px"><b>X</b>FabFilter P..requency</div><div class="c m m5" style="left:489px;width:118px"><b>X</b>FabFilter P..requency</div><div class="c m m5" style="left:607px;width:117px"><b>X</b>FabFilter..requency</div><div class="c m m5" style="left:724px;width:117px"><b>X</b>FabFilter P..requency</div><div class="c m m5" style="left:841px;width:117px"><b>X</b>FabFilter P..requency</div><div class="c m m5" style="left:958px;width:117px"><b>X</b>FabFilter P..requency</div><div class="c m m5" style="left:1075px;width:117px"><b>X</b>FabFilter..requency</div><div class="c m m5" style="left:1192px;width:117px"><b>X</b>FabFilter P..requency</div><div class="c m m5" style="left:1309px;width:117px"><b>X</b>FabFilter P..requency</div><div class="c m m5" style="left:1426px;width:117px"><b>X</b>FabFilter P..requency</div></div>
<div class="r" style="top:693.5px"><div class="c m m6" style="left:297px;width:75px"><b>X</b>FabFil..ency</div><div class="c m m6" style="left:372px;width:117px"><b>X</b>FabFilter P..requency</div><div class="c m m6" style="left:489px;width:118px"><b>X</b>FabFilter P..requency</div><div class="c m m6" style="left:607px;width:117px"><b>X</b>FabFilter P..requency</div><div class="c m m6" style="left:724px;width:117px"><b>X</b>FabFilter P..requency</div><div class="c m m6" style="left:841px;width:117px"><b>X</b>FabFilter P..requency</div><div class="c m m6" style="left:958px;width:117px"><b>X</b>FabFilter P..requency</div><div class="c m m6" style="left:1075px;width:117px"><b>X</b>FabFilter..requency</div><div class="c m m6" style="left:1192px;width:117px"><b>X</b>FabFilter P..requency</div><div class="c m m6" style="left:1309px;width:117px"><b>X</b>FabFilter P..requency</div><div class="c m m6" style="left:1426px;width:117px"><b>X</b>FabFilter P..requency</div></div>
<div class="r" style="top:710.9px"><div class="c m m5" style="left:297px;width:75px"><b>X</b>FabFilt..Gain</div><div class="c m m5" style="left:372px;width:117px"><b>X</b>FabFilter..nd 6 Gain</div><div class="c m m5" style="left:489px;width:118px"><b>X</b>FabFilter..nd 6 Gain</div><div class="c m m5" style="left:607px;width:117px"><b>X</b>FabFilter..nd 6 Gain</div><div class="c m m5" style="left:724px;width:117px"><b>X</b>FabFilter..nd 6 Gain</div><div class="c m m5" style="left:841px;width:117px"><b>X</b>FabFilter..nd 6 Gain</div><div class="c m m5" style="left:958px;width:117px"><b>X</b>FabFilter..nd 6 Gain</div><div class="c m m5" style="left:1075px;width:117px"><b>X</b>FabFilter..nd 6 Gain</div><div class="c m m5" style="left:1192px;width:117px"><b>X</b>FabFilter..nd 6 Gain</div><div class="c m m5" style="left:1309px;width:117px"><b>X</b>FabFilter..nd 6 Gain</div><div class="c m m5" style="left:1426px;width:117px"><b>X</b>FabFilter..nd 6 Gain</div></div>
<div class="r" style="top:728.3px"><div class="c m m4" style="left:297px;width:75px"><b>X</b>FabFilt..Gain</div><div class="c m m4" style="left:372px;width:117px"><b>X</b>FabFilter..nd 9 Gain</div><div class="c m m4" style="left:489px;width:118px"><b>X</b>FabFilter..nd 9 Gain</div><div class="c m m4" style="left:607px;width:117px"><b>X</b>FabFilter..nd 9 Gain</div><div class="c m m4" style="left:724px;width:117px"><b>X</b>FabFilter..nd 9 Gain</div><div class="c m m4" style="left:841px;width:117px"><b>X</b>FabFilter..nd 9 Gain</div><div class="c m m4" style="left:958px;width:117px"><b>X</b>FabFilter..nd 9 Gain</div><div class="c m m4" style="left:1075px;width:117px"><b>X</b>FabFilter..nd 9 Gain</div><div class="c m m4" style="left:1192px;width:117px"><b>X</b>FabFilter..nd 9 Gain</div><div class="c m m4" style="left:1309px;width:117px"><b>X</b>FabFilter..nd 9 Gain</div><div class="c m m4" style="left:1426px;width:117px"><b>X</b>FabFilter..nd 9 Gain</div></div>
<!-- 90 -->
<div class="r" style="top:745.7px"><div class="ab" style="left:367px;top:1px;width:234px;height:16px;background:repeating-linear-gradient(90deg,rgba(40,48,55,.5) 0 1px,transparent 1px 2.5px)"></div><div class="ab" style="left:607px;top:1px;width:813px;height:16px;background:repeating-linear-gradient(90deg,rgba(40,48,55,.5) 0 1px,transparent 1px 2.5px)"></div></div>
<!-- 91/92 -->
<div class="r" style="top:763.1px"><div class="c m m3" style="left:767px;width:191px"><b>X</b>FabFilter Pro-Q 3..ss - Band 12 Gain</div></div>
<div class="r" style="top:780.5px"><div class="c m m3" style="left:767px;width:191px"><b>X</b>Balance (Slot 7)..low bass - Volume</div></div>

</div></body></html>
